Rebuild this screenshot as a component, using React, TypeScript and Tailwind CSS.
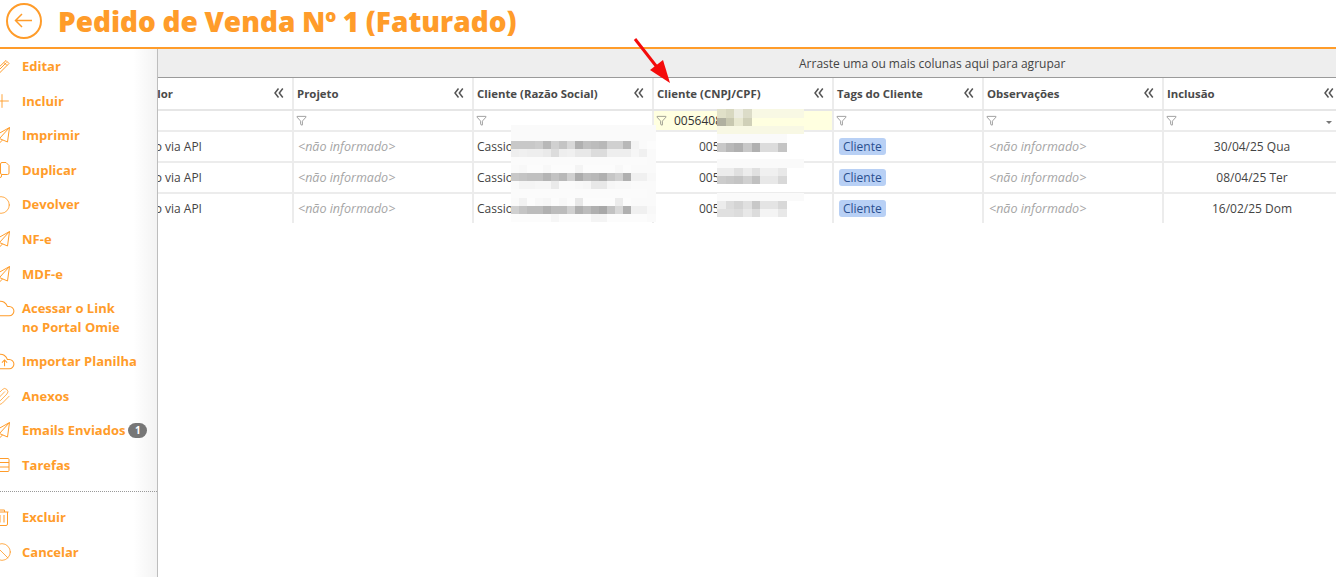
import React from 'react'
import { Plus, Circle, Cloud, Paperclip, Ban, Funnel } from 'lucide-react'

type IconProps = { className?: string; strokeWidth?: number }

const PencilIcon = ({ className }: IconProps) => (
  <svg viewBox="0 0 16 16" fill="none" stroke="currentColor" strokeWidth="1" className={className}>
    <path d="M12 1.500l3 3L5 14.500.7 15.500l1-4.200zM1.700 11.300l3.300 3.200M10 3.500l3 3M3.500 12.500L12.500 3.500" />
  </svg>
)

const PlaneIcon = ({ className }: IconProps) => (
  <svg viewBox="0 0 16 17" fill="none" stroke="currentColor" strokeWidth="1" className={className}>
    <path d="M15.500.5L.5 9l5 2.500 8 3.500zM15.500.5L5.500 11.500V16l3-3" />
  </svg>
)

const CloudUpIcon = ({ className }: IconProps) => (
  <svg viewBox="0 0 24 24" fill="none" stroke="currentColor" strokeWidth="1" className={className}>
    <path d="M17.500 19H9a7 7 0 1 1 6.710-9h1.790a4.500 4.500 0 1 1 0 9Z" />
    <path d="M13 16.500v-6M10.500 13L13 10.500l2.500 2.500" />
  </svg>
)

const CopyIcon = ({ className }: IconProps) => (
  <svg viewBox="0 0 16 18" fill="none" stroke="currentColor" strokeWidth="1" className={className}>
    <path d="M8 1.500h4l3 3v7.500a1.500 1.500 0 0 1-1.500 1.500H8A1.500 1.500 0 0 1 6.500 12V3A1.500 1.500 0 0 1 8 1.500z" />
    <path d="M4 5.500H2A1.500 1.500 0 0 0 .5 7v8A1.500 1.500 0 0 0 2 16.500h4A1.500 1.500 0 0 0 7.500 15v-1" />
  </svg>
)

const TableIcon = ({ className }: IconProps) => (
  <svg viewBox="0 0 16 16" fill="none" stroke="currentColor" strokeWidth="1" className={className}>
    <rect x="1" y="1.500" width="14" height="13" rx="1" />
    <path d="M1 5.500h14M1 10h14" />
  </svg>
)

const TrashIcon = ({ className }: IconProps) => (
  <svg viewBox="0 0 14 17" fill="none" stroke="currentColor" strokeWidth="1" className={className}>
    <path d="M.5 3h13M4.500 3V1h5v2M1.500 3v12a1.500 1.500 0 0 0 1.500 1.500h8a1.500 1.500 0 0 0 1.500-1.500V3M5 6v7.500M9 6v7.500" />
  </svg>
)

const DoubleChevron = ({ className }: IconProps) => (
  <svg viewBox="0 0 10 10" fill="none" stroke="currentColor" strokeWidth="1.500" className={className}>
    <path d="M4.500.5 1 5l3.500 4.500M8.800.5 5.300 5l3.500 4.500" />
  </svg>
)

type MenuItem = {
  label: string[]
  icon: React.ComponentType<any>
  iconClass: string
  badge?: string
}

const plane = 'w-[16px] h-[17px] shrink-0'

const menu: MenuItem[] = [
  { label: ['Editar'], icon: PencilIcon, iconClass: 'w-[16px] h-[16px] shrink-0' },
  { label: ['Incluir'], icon: Plus, iconClass: 'w-[22px] h-[22px] shrink-0' },
  { label: ['Imprimir'], icon: PlaneIcon, iconClass: plane },
  { label: ['Duplicar'], icon: CopyIcon, iconClass: 'w-[16px] h-[18px] shrink-0 ml-[-1px]' },
  { label: ['Devolver'], icon: Circle, iconClass: 'w-[20px] h-[20px] shrink-0 ml-[-2px]' },
  { label: ['NF-e'], icon: PlaneIcon, iconClass: plane },
  { label: ['MDF-e'], icon: PlaneIcon, iconClass: plane },
  { label: ['Acessar o Link', 'no Portal Omie'], icon: Cloud, iconClass: 'w-[25px] h-[25px] shrink-0 ml-[2px]' },
  { label: ['Importar Planilha'], icon: CloudUpIcon, iconClass: 'w-[25px] h-[25px] shrink-0 ml-[2px]' },
  { label: ['Anexos'], icon: Paperclip, iconClass: 'w-[19px] h-[19px] shrink-0 ml-[-1px]' },
  { label: ['Emails Enviados'], icon: PlaneIcon, iconClass: plane, badge: '1' },
  { label: ['Tarefas'], icon: TableIcon, iconClass: 'w-[16px] h-[16px] shrink-0' },
]

const bottomMenu: MenuItem[] = [
  { label: ['Excluir'], icon: TrashIcon, iconClass: 'w-[14px] h-[17px] shrink-0' },
  { label: ['Cancelar'], icon: Ban, iconClass: 'w-[20px] h-[20px] shrink-0' },
]

const SideItem = ({ item }: { item: MenuItem }) => {
  const Icon = item.icon
  return (
    <div
      className={`flex items-start gap-[12px] -ml-[6px] py-[7.8px] text-[13px] leading-[19px] font-bold text-[#ff9c2a] ${
        item.label.length > 1 ? '-mb-[0.7px]' : ''
      }`}
    >
      <div className="w-[16px] h-[19px] shrink-0 flex items-center justify-center">
        <Icon className={item.iconClass} strokeWidth={1} />
      </div>
      <div className="whitespace-nowrap">
        {item.label.map(line => (
          <div key={line}>
            {line}
            {item.badge && (
              <span className="inline-block align-[1px] ml-[3px] w-[19px] h-[15px] rounded-full bg-[#777] text-white text-[10px] leading-[15px] text-center">
                {item.badge}
              </span>
            )}
          </div>
        ))}
      </div>
    </div>
  )
}

const Sidebar = () => (
  <aside className="w-[158px] shrink-0 overflow-hidden pt-[0.3px] border-r border-[#bdbdbd] bg-gradient-to-r from-white from-[85%] to-[#f3f3f3]">
    {menu.map(item => (
      <SideItem key={item.label[0]} item={item} />
    ))}
    <div className="mt-[8px] mb-[8.4px] border-t border-dotted border-[#999]" />
    {bottomMenu.map(item => (
      <SideItem key={item.label[0]} item={item} />
    ))}
  </aside>
)

const columns = [
  { title: 'Valor', w: 'w-[136px]', clip: true },
  { title: 'Projeto', w: 'w-[180px]' },
  { title: 'Cliente (Razão Social)', w: 'w-[180px]' },
  { title: 'Cliente (CNPJ/CPF)', w: 'w-[180px]' },
  { title: 'Tags do Cliente', w: 'w-[150px]' },
  { title: 'Observações', w: 'w-[180px]' },
  { title: 'Inclusão', w: 'w-[180px]' },
]

const rows = [
  { razao: 'Cassio', doc: '005', date: '30/04/25 Qua' },
  { razao: 'Cassio', doc: '005', date: '08/04/25 Ter' },
  { razao: 'Cassio', doc: '005', date: '16/02/25 Dom' },
]

const cellBorder = 'border-r-2 border-[#ececec]'

const NotInformed = () => (
  <span className="inline-block pt-[2px] italic text-[12.5px] text-[#a5a5a5]">{'<não informado>'}</span>
)

const DataTable = () => (
  <div className="text-[12px] text-[#444]">
    <div className="flex h-[33px] border-b-[2px] border-[#e6e6e6]">
      {columns.map(col => (
        <div key={col.title} className={`${col.w} shrink-0 flex items-center overflow-hidden ${cellBorder} relative`}>
          <span className={`${col.clip ? 'ml-[-15px]' : 'ml-[3px]'} font-bold text-[11.4px] text-[#4a4a4a]`}>{col.title}</span>
          <DoubleChevron className="absolute right-[8px] top-[10px] w-[10px] h-[10px] text-[#555]" />
        </div>
      ))}
    </div>
    <div className="flex h-[21px] border-b-2 border-[#ececec]">
      {columns.map((col, i) => (
        <div
          key={col.title}
          className={`${col.w} shrink-0 flex items-center relative ${cellBorder} ${i === 3 ? 'bg-[#ffffe0]' : ''}`}
        >
          {i > 0 && <Funnel className="ml-[2px] w-[11px] h-[11px] text-[#555]" strokeWidth={1.2} />}
          {i === 3 && <span className="ml-[7px] text-[#333]">0056408</span>}
          {i === 6 && (
            <span className="absolute right-[10px] top-[10px] border-x-[3px] border-t-[3px] border-x-transparent border-t-[#777]" />
          )}
        </div>
      ))}
    </div>
    {rows.map(row => (
      <div key={row.date} className="flex h-[31px] border-b-2 border-[#ececec] last:border-transparent items-stretch">
        <div className={`w-[136px] shrink-0 flex items-center overflow-hidden whitespace-nowrap ${cellBorder}`}>
          <span className="ml-[-35px]">Pedido via API</span>
        </div>
        <div className={`w-[180px] shrink-0 flex items-center pl-[4px] ${cellBorder}`}>
          <NotInformed />
        </div>
        <div className={`w-[180px] shrink-0 flex items-center pl-[3px] ${cellBorder}`}>{row.razao}</div>
        <div className={`w-[180px] shrink-0 flex items-center pl-[45px] ${cellBorder}`}>{row.doc}</div>
        <div className={`w-[150px] shrink-0 flex items-center pl-[5px] ${cellBorder}`}>
          <span className="px-[4px] h-[17px] leading-[17px] rounded-[3px] bg-[#b8d0f5] text-[#2a4f8f]">Cliente</span>
        </div>
        <div className={`w-[180px] shrink-0 flex items-center pl-[5px] ${cellBorder}`}>
          <NotInformed />
        </div>
        <div className={`w-[180px] shrink-0 flex items-center justify-center pr-[2px] ${cellBorder}`}>{row.date}</div>
      </div>
    ))}
  </div>
)

// pixelated censor blocks painted over the client columns
type Band = { x: number; y: number; w: number; h: number; fill: string[] }

const hex = (s: string) => s.split(' ').map(v => (v.length === 2 ? `#${v}${v}${v}` : `#${v}`))

const bands: Band[] = [
  { x: 511, y: 125, w: 8, h: 16, fill: hex('fa fa fa fa fa fa fa fa fa fa fa fa fa fa fa fa fa fa') },
  { x: 511, y: 141, w: 8, h: 8, fill: hex('c8 c8 c8 cc b8 d0 c4 d8 b0 c0 bc b8 d0 d0 b8 f4 fa fc') },
  { x: 511, y: 149, w: 8, h: 8, fill: hex('ee f0 ee ee ea dc ee f0 e8 e8 dc dc ee ee ee f6 f0 fa') },
  { x: 511, y: 157, w: 8, h: 8, fill: hex('fb fb fb fb fb fb fb fb fb fb fb fb fb fb fb fb fb fa') },
  { x: 511, y: 165, w: 8, h: 8, fill: hex('fa f8 fc fc f8 fc fc fc f4 fc fc fc fc f8 fc fa fa fa') },
  { x: 511, y: 173, w: 8, h: 8, fill: hex('c8 c4 c0 c0 b4 c2 b8 d0 ac bc b8 b0 c6 d0 b0 f0 f0 f8') },
  { x: 511, y: 181, w: 8, h: 8, fill: hex('fa f4 f4 f6 f6 ea fa fa f8 f6 e8 e8 f6 f8 f8 fa fa fa') },
  { x: 511, y: 189, w: 8, h: 9, fill: hex('fb fb fb fb fb fb fb fb fb fb fb fb fb fb fb fb fb fa') },
  { x: 511, y: 198, w: 8, h: 8, fill: hex('fa f2 fc f8 f6 fc f8 fc e8 fc fc fc fc ec fc fa fa fa') },
  { x: 511, y: 206, w: 8, h: 8, fill: hex('d0 c4 bc bc b0 bc bc d0 b0 bc b0 a8 c2 d8 b0 f0 f0 f8') },
  { x: 511, y: 214, w: 8, h: 8, fill: hex('fc fc fc fc fc f6 fc fc fc fc f4 f4 fc fc fc fc fc fa') },
  { x: 717, y: 109, w: 8.67, h: 9, fill: hex('e0e0c8 d8d8c0 ecece0 dcdcc8 f8f8e4 f8f8e4 f8f8e4 f8f8e4 f8f8e4 f8f8e4') },
  { x: 717, y: 118, w: 8.67, h: 8, fill: hex('b0b0a0 c8c8b0 e8e8d0 d0d0b8 ffffe0 ffffe0 ffffe0 ffffe0 ffffe0 ffffe0') },
  { x: 717, y: 126, w: 8.67, h: 8, fill: hex('f8f8e4 f8f8e4 f8f8e4 f8f8e4 f8f8e4 f8f8e4 f8f8e4 f8f8e4 f8f8e4 f8f8e4') },
  { x: 717, y: 134, w: 8.67, h: 9, fill: hex('fa fa fa fa fa fa fa fa') },
  { x: 717, y: 143, w: 8.67, h: 9, fill: hex('c8 b8 b0 c8 b0 dc dc c4') },
  { x: 717, y: 152, w: 8.67, h: 7, fill: hex('ff ff ff ff ff ff ff ff') },
  { x: 717, y: 159, w: 8.67, h: 9, fill: hex('fa fa fa fa fa fa fa fa fa fa') },
  { x: 717, y: 168, w: 8.67, h: 8, fill: hex('ec ec e0 ec e0 f0 f0 e8') },
  { x: 717, y: 176, w: 8.67, h: 8, fill: hex('cc c8 c4 d0 c0 e8 e8 d8') },
  { x: 717, y: 193, w: 8.67, h: 8, fill: hex('fa fa fa fa fa fa fa fa fa fa') },
  { x: 717, y: 201, w: 8.67, h: 8, fill: hex('ec dc d4 e0 c8 e4 e4 d8') },
  { x: 717, y: 209, w: 8.67, h: 8, fill: hex('e0 e0 dc e8 dc f4 f4 e8') },
]

const Overlay = () => (
  <svg className="absolute left-0 top-0 pointer-events-none" width={1336} height={577} shapeRendering="crispEdges">
    {bands.map(b =>
      b.fill.map((f, i) => <rect key={`${b.x}-${b.y}-${i}`} x={b.x + i * b.w} y={b.y} width={b.w + 0.5} height={b.h} fill={f} />),
    )}
    <g shapeRendering="auto">
      <path d="M635 39 L660 71" stroke="#f40b0b" strokeWidth="3" />
      <path d="M670 83 L650 70 L663 60 Z" fill="#f40b0b" />
    </g>
  </svg>
)

export default function App() {
  return (
    <div className="relative h-[577px] w-[1336px] overflow-hidden bg-white font-['Open_Sans',sans-serif]">
      <header className="flex items-center h-[49px] border-b-2 border-[#ff9c2a] pl-[6px] pb-[6px] text-[#ff9c2a]">
        <svg viewBox="0 0 36 36" className="w-[36px] h-[36px]" fill="none" stroke="currentColor" strokeWidth="2">
          <circle cx="18" cy="18" r="17" />
          <path d="M26 17.500H9.500M16 11l-6.500 6.500L16 24" strokeWidth="1.500" />
        </svg>
        <h1 className="ml-[16px] text-[28px] font-extrabold [word-spacing:-0.7px]">Pedido de Venda Nº 1 (Faturado)</h1>
      </header>
      <div className="flex h-[528px]">
        <Sidebar />
        <main className="flex-1 min-w-0 overflow-hidden">
          <div className="h-[29px] bg-[#eeeeee] border-b border-[#9a9a9a] pl-[641px] text-[12px] leading-[29px] text-[#444] whitespace-nowrap">
            Arraste uma ou mais colunas aqui para agrupar
          </div>
          <div className="w-[1200px]">
            <DataTable />
          </div>
        </main>
      </div>
      <Overlay />
    </div>
  )
}
